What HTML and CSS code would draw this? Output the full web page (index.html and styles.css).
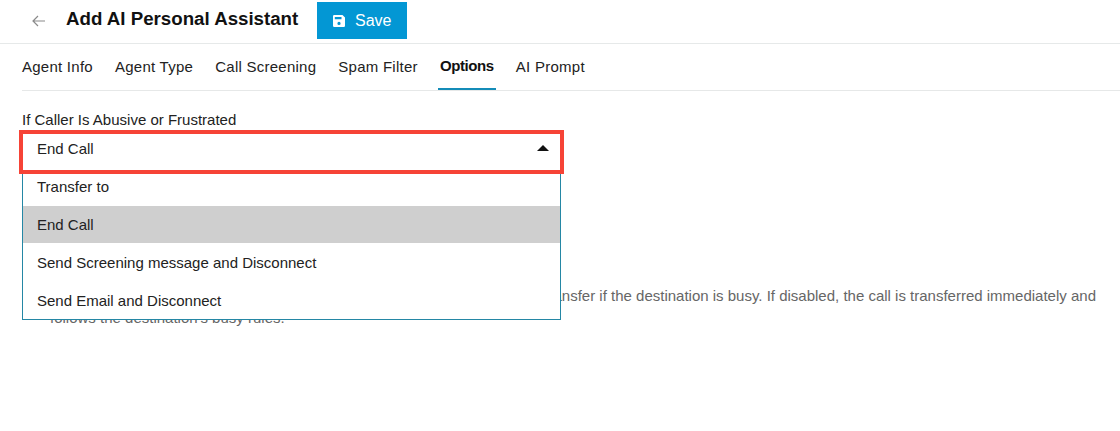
FILE: index.html
```html
<!DOCTYPE html>
<html lang="en">
<head>
	<meta charset="UTF-8">
	<title>Add AI Personal Assistant</title>
	<link rel="stylesheet" href="styles.css">
</head>
<body>
	<div class="header">
		<a class="back" href="javascript:;">
			<svg width="14" height="12" viewBox="0 0 14 12"><path d="M13 6H1.2M6 1L1 6l5 5" fill="none" stroke="#8a8a8a" stroke-width="1.2"/></svg>
		</a>
		<h1>Add AI Personal Assistant</h1>
		<button class="save">
			<svg width="12" height="12" viewBox="0 0 12 12"><path fill="#fff" fill-rule="evenodd" d="M1.200 0H9.500L12 2.500v8.300a1.200 1.200 0 0 1-1.200 1.200H1.200A1.200 1.200 0 0 1 0 10.800V1.200A1.200 1.200 0 0 1 1.200 0zM1.800 1.900v2.300h6.700V1.900zM6 6.800a1.600 1.600 0 1 0 0 3.200 1.600 1.600 0 0 0 0-3.200z"/></svg>
			<span>Save</span>
		</button>
	</div>
	<ul class="tabs">
		<li><a href="javascript:;">Agent Info</a></li>
		<li><a href="javascript:;">Agent Type</a></li>
		<li><a href="javascript:;">Call Screening</a></li>
		<li><a href="javascript:;">Spam Filter</a></li>
		<li><a href="javascript:;" class="active">Options</a></li>
		<li><a href="javascript:;">AI Prompt</a></li>
	</ul>
	<div class="content">
		<label class="label">If Caller Is Abusive or Frustrated</label>
		<div class="select">
			<div class="value"><span>End Call</span><i class="arrow"></i></div>
			<ul class="menu">
				<li>Transfer to</li>
				<li class="selected">End Call</li>
				<li>Send Screening message and Disconnect</li>
				<li>Send Email and Disconnect</li>
			</ul>
			<div class="highlight"></div>
		</div>
		<div class="hint">
			<p class="first">transfer if the destination is busy. If disabled, the call is transferred immediately and</p>
			<p>follows the destination's busy rules.</p>
		</div>
	</div>
</body>
</html>
```
FILE: styles.css
```css
*{
	box-sizing:border-box;
	padding:0;
	margin:0;
	list-style:none;
}
body{
	height:431px;
	overflow:hidden;
	background-color:#fff;
	color:#222;
	font-family:"Liberation Sans",Arial,sans-serif;
	font-size:15px;
}
a{
	color:inherit;
	text-decoration:none;
}
svg{
	display:block;
}
.header{
	display:flex;
	height:44px;
	padding:2px 0 0 32px;
	border-bottom:1px solid #e6e9e9;
}
.back{
	width:34px;
	padding-top:13px;
}
.header h1{
	width:251px;
	color:#111;
	font-size:18.7px;
	line-height:34px;
	white-space:nowrap;
}
.save{
	display:flex;
	align-items:center;
	width:90px;
	height:37px;
	padding-left:16px;
	border:0;
	background-color:#0397d4;
	color:#fff;
	font:16px "Liberation Sans",Arial,sans-serif;
}
.save span{
	margin-left:10px;
}
.tabs{
	display:flex;
	height:47px;
	margin-left:22px;
	border-bottom:1px solid #e6e8e8;
	line-height:46px;
	letter-spacing:.25px;
	white-space:nowrap;
}
.tabs li{
	margin-right:22.1px;
}
.tabs .active{
	display:block;
	height:46px;
	padding:0 2px;
	margin:0 -2px;
	border-bottom:2px solid #148cb8;
	color:#111;
	font-weight:bold;
	line-height:43px;
	letter-spacing:-.4px;
}
.content{
	padding:19px 22px 0;
}
.label{
	display:block;
	height:22px;
	line-height:20px;
}
.select{
	position:relative;
	width:539px;
	height:42px;
}
.value{
	display:flex;
	align-items:center;
	justify-content:space-between;
	height:32px;
	padding:0 12px 0 15px;
}
.arrow{
	border:6px solid transparent;
	border-top:0;
	border-bottom:6px solid #111;
}
.menu{
	position:absolute;
	top:36px;
	left:0;
	z-index:1;
	width:539px;
	height:152px;
	border:1px solid #2487a5;
	border-top:0;
	background-color:#fff;
}
.menu li{
	height:38px;
	padding-left:14px;
	line-height:37px;
}
.menu .selected{
	height:37px;
	margin-bottom:1px;
	background-color:#cfcfcf;
}
.highlight{
	position:absolute;
	top:-2px;
	left:-3px;
	z-index:2;
	width:545px;
	height:44px;
	border:4px solid #f64336;
}
.hint{
	padding:111px 2px 0 28px;
	color:#666;
	line-height:22px;
}
.hint .first{
	text-align:right;
}
```
